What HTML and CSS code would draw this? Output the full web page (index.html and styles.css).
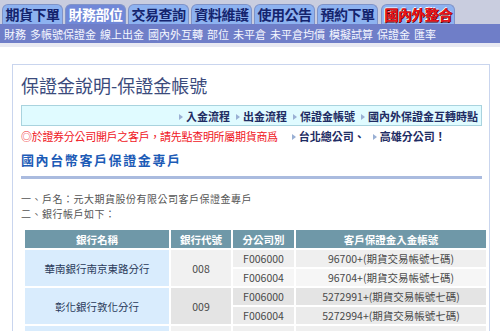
FILE: index.html
```html
<!DOCTYPE html>
<html lang="zh-Hant">
<head>
  <meta charset="UTF-8">
  <title>保證金說明-保證金帳號</title>
  <meta name="viewport" content="width=device-width, initial-scale=1.0">
  <link rel="stylesheet" href="styles.css">
</head>
<body>

  <div class="tabs">
    <div class="tab">期貨下單</div>
    <div class="tab active">財務部位</div>
    <div class="tab">交易查詢</div>
    <div class="tab">資料維護</div>
    <div class="tab">使用公告</div>
    <div class="tab">預約下單</div>
    <div class="tab special">國內外整合</div>
  </div>

  <div class="submenu">
    <span>財務</span>
    <span>多帳號保證金</span>
    <span>線上出金</span>
    <span>國內外互轉</span>
    <span>部位</span>
    <span>未平倉</span>
    <span>未平倉均價</span>
    <span>模擬試算</span>
    <span>保證金</span>
    <span>匯率</span>
  </div>
  <div class="strip"></div>

  <div class="panel">
    <h1>保證金說明-保證金帳號</h1>

    <div class="links">
      <span class="arrow">入金流程</span>
      <span class="arrow">出金流程</span>
      <span class="arrow">保證金帳號</span>
      <span class="arrow">國內外保證金互轉時點</span>
    </div>

    <div class="notice">
      <span class="red">◎於證券分公司開戶之客戶，請先點查明所屬期貨商爲</span>
      <span class="arrow">台北總公司、</span>
      <span class="arrow">高雄分公司！</span>
    </div>

    <h2>國內台幣客戶保證金專戶</h2>

    <div class="info">一、戶名：元大期貨股份有限公司客戶保證金專戶</div>
    <div class="info">二、銀行帳戶如下：</div>

    <table class="banks">
      <tr>
        <th class="c-name">銀行名稱</th>
        <th class="c-code">銀行代號</th>
        <th class="c-br">分公司別</th>
        <th>客戶保證金入金帳號</th>
      </tr>
      <tr class="odd">
        <td class="name" rowspan="2">華南銀行南京東路分行</td>
        <td class="code" rowspan="2">008</td>
        <td>F006000</td>
        <td>96700+(期貨交易帳號七碼)</td>
      </tr>
      <tr class="odd b">
        <td>F006004</td>
        <td>96704+(期貨交易帳號七碼)</td>
      </tr>
      <tr class="even">
        <td class="name" rowspan="2">彰化銀行敦化分行</td>
        <td class="code" rowspan="2">009</td>
        <td>F006000</td>
        <td>5272991+(期貨交易帳號七碼)</td>
      </tr>
      <tr class="even b">
        <td>F006004</td>
        <td>5272994+(期貨交易帳號七碼)</td>
      </tr>
      <tr class="odd">
        <td class="name"></td>
        <td class="code"></td>
        <td></td>
        <td></td>
      </tr>
    </table>
  </div>

</body>
</html>
```

FILE: styles.css
```css
body {
  margin: 0;
  background: #ffffff;
  font-family: "Noto Sans CJK TC", "Liberation Sans", sans-serif;
  overflow: hidden;
}

.tabs {
  display: flex;
  gap: 2px;
  height: 24px;
  padding: 0 0 0 2px;
  align-items: flex-end;
  background: #c9cddf;
}

.tab {
  height: 19px;
  padding: 0 1px;
  width: 57px;
  text-align: center;
  font-size: 14px;
  line-height: 19px;
  font-weight: bold;
  color: #14246e;
  background: #8db2f0;
  border-radius: 6px 6px 0 0;
  border: 1px solid #7f93c8;
  border-bottom: none;
  letter-spacing: -0.5px;
}

.tab.active {
  color: #ffffff;
  background: #7088d8;
}

.tab.special {
  width: 70px;
  margin-left: 1px;
  color: #e8141c;
  text-shadow: 1px 0 #5a0000, -1px 0 #ffffff, 0 1px #5a0000, 0 -1px #ffffff;
}

.submenu {
  display: flex;
  gap: 4px;
  height: 19px;
  padding-left: 4px;
  align-items: center;
  background: #6f7ec8;
  color: #f4f6ff;
  font-size: 11px;
}

.strip {
  height: 4px;
  background: #e8e9f2;
}

.panel {
  margin: 17px 10px 0 12px;
  padding: 2px 7px 0 8px;
  border: 1px solid #c9d5ee;
  border-bottom: none;
  height: 300px;
}

h1 {
  margin: 0;
  font-size: 18px;
  font-weight: normal;
  color: #3b4b7c;
  line-height: 32px;
  padding-top: 2px;
}

.links {
  margin-top: 4px;
  height: 19px;
  background: #e0fbff;
  border: 1px solid #a9d3de;
  display: flex;
  justify-content: flex-end;
  align-items: center;
  gap: 6px;
  padding-right: 3px;
  font-size: 11px;
  color: #1e2c63;
  font-weight: bold;
}

.arrow::before {
  content: "";
  display: inline-block;
  width: 0;
  height: 0;
  border-left: 4px solid #9ab0d4;
  border-top: 3px solid transparent;
  border-bottom: 3px solid transparent;
  margin-right: 3px;
  vertical-align: 1px;
}

.notice {
  margin-top: 2px;
  font-size: 11px;
  line-height: 16px;
  display: flex;
  gap: 8px;
  white-space: nowrap;
  color: #1e2c63;
  font-weight: bold;
}

.red {
  color: #f0141c;
  font-weight: normal;
  letter-spacing: -0.3px;
  margin-right: 6px;
}

h2 {
  margin: 6px 0 0 0;
  font-size: 13px;
  letter-spacing: 1.6px;
  color: #1c5bb6;
  line-height: 20px;
  padding-bottom: 6px;
  border-bottom: 3px solid #aabbdf;
}

.info {
  font-size: 10px;
  color: #555555;
  letter-spacing: 0.5px;
  line-height: 15px;
}

h2 + .info {
  margin-top: 12px;
}

.banks {
  margin: 9px 0 0 2px;
  width: 465px;
  border-collapse: collapse;
  font-size: 10.5px;
  color: #4a4a4a;
  text-align: center;
}

.banks th {
  background: #6f98a8;
  color: #ffffff;
  height: 18px;
  padding: 0;
  border: 2px solid #ffffff;
  border-top: none;
}

.banks td {
  height: 17px;
  padding: 0;
  border: 2px solid #ffffff;
}

.c-name { width: 144px; }
.c-code { width: 60px; }
.c-br { width: 61px; }

.banks td.name {
  background: #d9ecfd;
  color: #2a3a5a;
}

.odd td { background: #efefef; }
.odd.b td { background: #f6f6f6; }
.even td { background: #e4e4e4; }
.even.b td { background: #ebebeb; }

.odd td.code { background: #f1f1f1; }
.even td.code { background: #e4e4e4; }
```
